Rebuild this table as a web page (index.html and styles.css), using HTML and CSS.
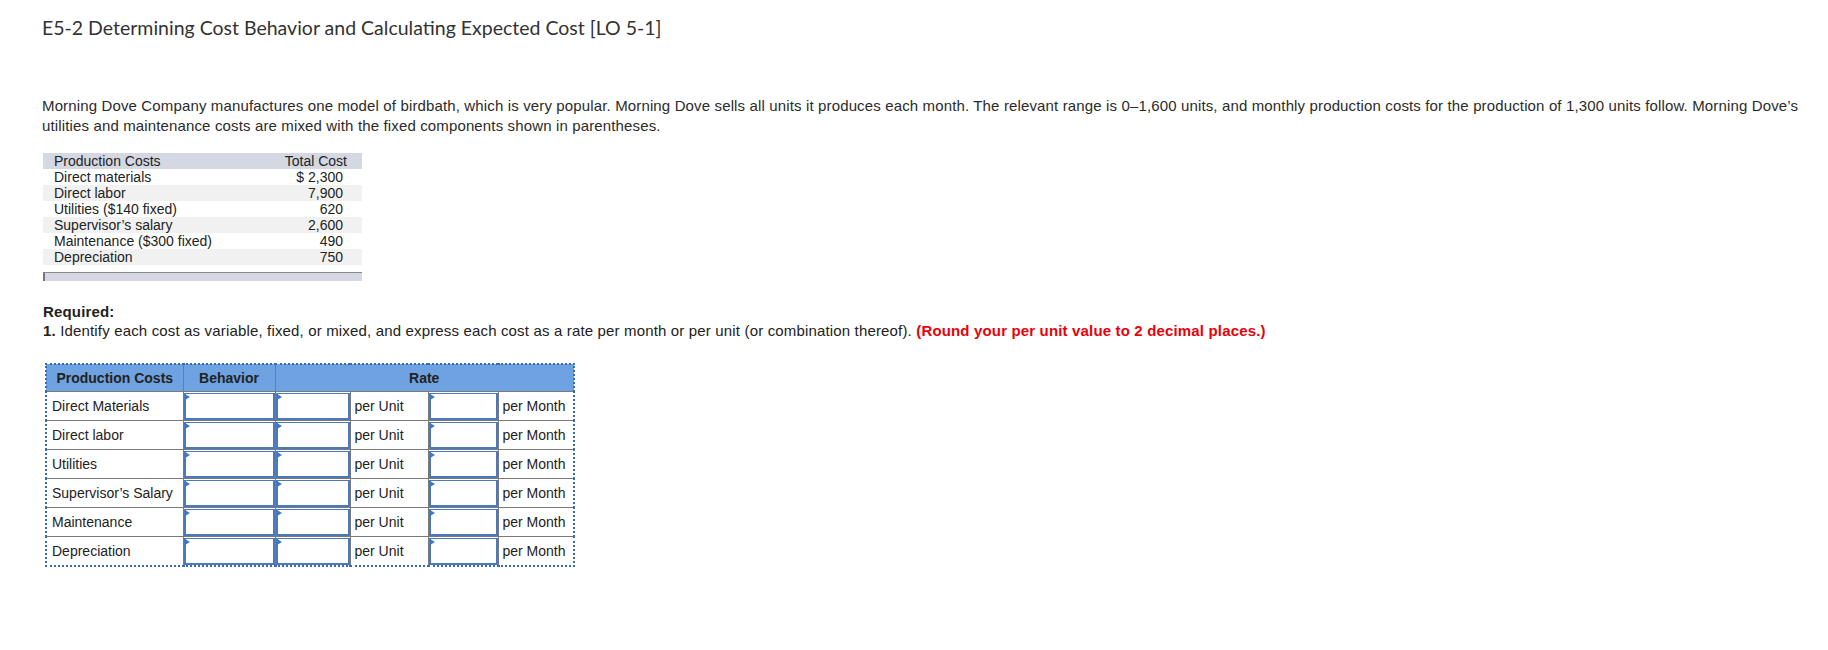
FILE: index.html
```html
<!DOCTYPE html>
<html>
<head>
	<meta charset="UTF-8">
	<title>E5-2 Determining Cost Behavior</title>
	<link rel="stylesheet" href="styles.css">
</head>
<body>
<div class="page">
	<h1 class="hd">E5-2 Determining Cost Behavior and Calculating Expected Cost [LO 5-1]</h1>
	<p class="intro">Morning Dove Company manufactures one model of birdbath, which is very popular. Morning Dove sells all units it produces each month. The relevant range is 0&ndash;1,600 units, and monthly production costs for the production of 1,300 units follow. Morning Dove&rsquo;s utilities and maintenance costs are mixed with the fixed components shown in parentheses.</p>

	<div class="data">
		<table class="costs">
			<tr class="head"><td>Production Costs</td><td class="num">Total Cost</td></tr>
			<tr><td>Direct materials</td><td class="num amt">$ 2,300</td></tr>
			<tr class="alt"><td>Direct labor</td><td class="num amt">7,900</td></tr>
			<tr><td>Utilities ($140 fixed)</td><td class="num amt">620</td></tr>
			<tr class="alt"><td>Supervisor&rsquo;s salary</td><td class="num amt">2,600</td></tr>
			<tr><td>Maintenance ($300 fixed)</td><td class="num amt">490</td></tr>
			<tr class="alt"><td>Depreciation</td><td class="num amt">750</td></tr>
		</table>
		<div class="bar"></div>
	</div>

	<div class="req">
		<b>Required:</b><br>
		<b>1.</b> Identify each cost as variable, fixed, or mixed, and express each cost as a rate per month or per unit (or combination thereof). <b class="red">(Round your per unit value to 2 decimal places.)</b>
	</div>

	<table class="answer">
		<tr class="ahead">
			<th class="c1">Production Costs</th>
			<th class="c2">Behavior</th>
			<th colspan="4">Rate</th>
		</tr>
		<tr>
			<td>Direct Materials</td>
			<td class="in"><div class="box"></div></td>
			<td class="in"><div class="box"></div></td>
			<td>per Unit</td>
			<td class="in"><div class="box"></div></td>
			<td>per Month</td>
		</tr>
		<tr>
			<td>Direct labor</td>
			<td class="in"><div class="box"></div></td>
			<td class="in"><div class="box"></div></td>
			<td>per Unit</td>
			<td class="in"><div class="box"></div></td>
			<td>per Month</td>
		</tr>
		<tr>
			<td>Utilities</td>
			<td class="in"><div class="box"></div></td>
			<td class="in"><div class="box"></div></td>
			<td>per Unit</td>
			<td class="in"><div class="box"></div></td>
			<td>per Month</td>
		</tr>
		<tr>
			<td>Supervisor&rsquo;s Salary</td>
			<td class="in"><div class="box"></div></td>
			<td class="in"><div class="box"></div></td>
			<td>per Unit</td>
			<td class="in"><div class="box"></div></td>
			<td>per Month</td>
		</tr>
		<tr>
			<td>Maintenance</td>
			<td class="in"><div class="box"></div></td>
			<td class="in"><div class="box"></div></td>
			<td>per Unit</td>
			<td class="in"><div class="box"></div></td>
			<td>per Month</td>
		</tr>
		<tr>
			<td>Depreciation</td>
			<td class="in"><div class="box"></div></td>
			<td class="in"><div class="box"></div></td>
			<td>per Unit</td>
			<td class="in"><div class="box"></div></td>
			<td>per Month</td>
		</tr>
	</table>
</div>
</body>
</html>
```

FILE: styles.css
```css
* {
	box-sizing: border-box;
}
body {
	margin: 0;
	background: #fff;
	color: #333;
	font-family: "Liberation Sans", Arial, sans-serif;
	font-size: 14px;
}
.page {
	padding-left: 42px;
	padding-right: 10px;
}
.hd {
	margin: 14px 0 0;
	font-family: Lato, "Open Sans", sans-serif;
	font-weight: normal;
	font-size: 19.5px;
	line-height: 28px;
	color: #333;
}
.intro {
	margin: 54px 0 0;
	font-size: 15px;
	letter-spacing: 0.14px;
	line-height: 20px;
	color: #2b2b2b;
}

/* given data */
.data {
	margin-top: 17px;
	margin-left: 1px;
	width: 319px;
}
.costs {
	width: 100%;
	border-collapse: collapse;
	color: #222;
}
.costs td {
	padding: 0 0 0 11px;
	height: 16px;
	line-height: 16px;
}
.costs .num {
	text-align: right;
	padding: 0 15px 0 0;
}
.costs .amt {
	padding-right: 19px;
}
.costs .head {
	background: #d3d8e2;
}
.costs .alt {
	background: #f1f1f1;
}
.bar {
	margin-top: 7px;
	height: 9px;
	background: #d3d8e2;
	border-top: 1px solid #8a8a8a;
	border-left: 2px solid #777;
}

.req {
	margin: 21px 0 0 1px;
	font-size: 15px;
	letter-spacing: 0.16px;
	line-height: 19px;
	color: #222;
}
.red {
	color: #e8000b;
}

/* answer grid */
.answer {
	margin: 23px 0 0 3px;
	border-collapse: collapse;
	border: 2px dotted #3a6cb5;
	color: #222;
}
.answer th {
	background: #6ea2e0;
	height: 27px;
	font-weight: bold;
	text-align: center;
	border-left: 1px solid #7a7a7a;
	border-bottom: 1px solid #7a7a7a;
	padding: 0;
}
.answer th.c1 {
	border-left: none;
	width: 137px;
}
.answer th.c2 {
	width: 92px;
}
.answer td {
	height: 29px;
	border: 1px solid #7a7a7a;
	padding: 0 4px;
	white-space: nowrap;
}
.answer tr td:first-child {
	border-left: none;
	padding-left: 5px;
}
.answer tr td:last-child {
	border-right: none;
}
.answer tr:last-child td {
	border-bottom: none;
}
.answer td.in {
	padding: 1px 0 0;
}
.answer tr td:nth-child(3) {
	width: 75px;
}
.answer tr td:nth-child(4) {
	width: 78px;
}
.answer tr td:nth-child(5) {
	width: 70px;
}
.answer tr td:nth-child(6) {
	width: 76px;
}
.box {
	position: relative;
	height: 27px;
	border: 2px solid #4b79bc;
	border-top-width: 1px;
	background: #fff;
}
.box::before {
	content: "";
	position: absolute;
	left: -1px;
	top: 0;
	border-left: 5px solid #3a78cf;
	border-top: 3px solid transparent;
	border-bottom: 3px solid transparent;
}
```
